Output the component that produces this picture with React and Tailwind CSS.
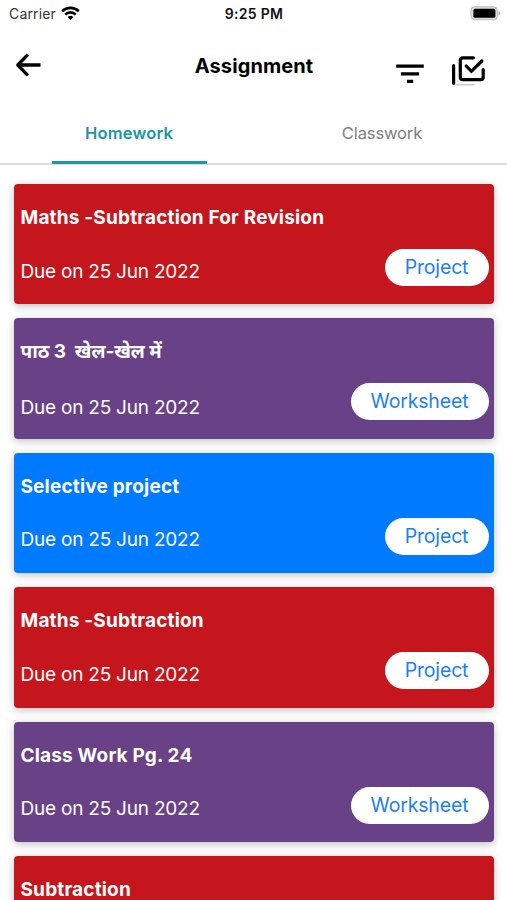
import { useState } from "react";

const assignments = [
  { title: "Maths -Subtraction For Revision", type: "Project", color: "bg-[#c4161c]" },
  { title: "पाठ 3  खेल-खेल में", type: "Worksheet", color: "bg-[#694186]", hindi: true },
  { title: "Selective project", type: "Project", color: "bg-[#007aff]" },
  { title: "Maths -Subtraction", type: "Project", color: "bg-[#c4161c]" },
  { title: "Class Work Pg. 24", type: "Worksheet", color: "bg-[#694186]" },
  { title: "Subtraction", type: "Project", color: "bg-[#c4161c]" },
];

function StatusBar() {
  return (
    <div className="h-7 grid grid-cols-3 items-center pl-[9px] pr-[6px] text-[14px] leading-7">
      <div className="flex items-center gap-[6px] text-[#333]">
        <span className="tracking-[0.15px]">Carrier</span>
        <svg className="-mt-px -ml-px" width="19" height="15" viewBox="0 0 19 15" fill="none" stroke="#000" strokeWidth="2.6">
          <path d="M1.2 5.2a12 12 0 0 1 16.6 0" />
          <path d="M4.2 8.5a7.6 7.6 0 0 1 10.6 0" />
          <path d="M6.6 11.1a4.2 4.2 0 0 1 5.8 0L9.5 14z" fill="#000" stroke="none" />
        </svg>
      </div>
      <span className="-ml-[2px] text-center font-semibold text-[#111] tracking-[0.3px]">9:25 PM</span>
      <svg className="justify-self-end -mt-[2px]" width="31" height="15" viewBox="0 0 31 15">
        <rect x="1" y="0.8" width="26.4" height="13" rx="3.6" fill="#ddd" stroke="#bbb" />
        <rect x="3.4" y="2.8" width="22" height="9" rx="1.6" fill="#000" />
        <path d="M28.5 5v4.6q1.8-.8 1.8-2.3T28.5 5z" fill="#aaa" />
      </svg>
    </div>
  );
}

function Header() {
  return (
    <div className="h-[74px] grid grid-cols-[1fr_auto_1fr] px-[15px] text-black">
      <button className="w-[27px] h-[74px] flex items-center" aria-label="Back">
        <svg
          width="27"
          height="24"
          viewBox="0 0 27 24"
          fill="none"
          stroke="#000"
          strokeWidth="3.3"
          strokeLinejoin="round"
        >
          <path d="M12.8 1.6 2.8 12l10 10.4M3 12h22.5" />
        </svg>
      </button>
      <h1 className="pl-px text-[20px] leading-[76px] font-bold tracking-[0.1px]">Assignment</h1>
      <div className="flex justify-end gap-[27px] pt-[27px] pr-[6px]">
        <button className="h-[32px]" aria-label="Filter">
          <svg width="29" height="32" viewBox="0 0 29 32" stroke="#000" strokeWidth="3.2">
            <path d="M.2 11.2h27.6M4.9 18.9h18.2M11 26.4h6.2" />
          </svg>
        </button>
        <button className="h-[32px]" aria-label="Select all">
          <svg
            width="34"
            height="32"
            viewBox="0 0 34 32"
            fill="none"
            stroke="#000"
            strokeWidth="3.2"
            strokeLinecap="round"
          >
            <path d="M4 29.8h18" stroke="#ccc" strokeWidth="1.6" />
            <path d="M1.6 10.5v17.8" />
            <path d="M21.4 2.8H11Q8.3 2.8 8.3 5.3v17q0 2.4 2.7 2.4h17.8q2.4 0 2.4-2.4v-7.6" />
            <path d="m14.2 11 5.2 5.3L29.8 6" />
          </svg>
        </button>
      </div>
    </div>
  );
}

function AssignmentCard({ item }) {
  return (
    <div
      className={`h-[120.4px] shrink-0 rounded-[4px] pl-[6.5px] pr-[5.5px] text-white shadow-[0_2px_8px_rgba(0,0,0,0.25)] ${item.color}`}
    >
      <h2
        className={`pt-[19px] h-[65px] font-bold text-[19px] leading-[30px] whitespace-pre ${
          item.hindi ? "tracking-[-0.05px]" : "tracking-[0.18px]"
        }`}
      >
        {item.title}
      </h2>
      <div className="flex justify-between items-start">
        <p
          className={`text-[19px] leading-[30px] tracking-[-0.22px] ${
            item.hindi ? "pt-[10px]" : "pt-[7.5px]"
          }`}
        >
          Due on 25 Jun 2022
        </p>
        <span
          className={`h-[37px] rounded-full bg-white text-center text-[19.5px] leading-[37px] tracking-[-0.15px] text-[#1b80f5] ${
            item.type === "Project" ? "w-[104px]" : "w-[138px]"
          }`}
        >
          {item.type}
        </span>
      </div>
    </div>
  );
}

export default function App() {
  const [tab, setTab] = useState("Homework");

  return (
    <div className="h-[900px] w-[507px] overflow-hidden bg-white flex flex-col font-[Inter,'Noto_Sans_Devanagari','Noto_Sans',sans-serif]">
      <StatusBar />
      <Header />

      {/* Tabs */}
      <div className="h-[63px] shrink-0 grid grid-cols-2 border-b-2 border-[#dcdcdc] pl-[3px]">
        {["Homework", "Classwork"].map((name) => (
          <button
            key={name}
            onClick={() => setTab(name)}
            className={`-mb-px h-[62px] w-[155px] justify-self-center pt-[3px] text-[16.5px] border-b-[3px] ${
              tab === name
                ? "border-[#1c97a3] text-[#1c97a3] font-semibold tracking-[0.2px]"
                : "border-transparent text-[#808080] tracking-[-0.12px] pl-[2px]"
            }`}
          >
            {name}
          </button>
        ))}
      </div>

      {/* Assignment list */}
      <div className="flex flex-col gap-[14px] pt-[19px] pl-[14px] pr-[13px]">
        {assignments.map((item) => (
          <AssignmentCard key={item.title} item={item} />
        ))}
      </div>
    </div>
  );
}
